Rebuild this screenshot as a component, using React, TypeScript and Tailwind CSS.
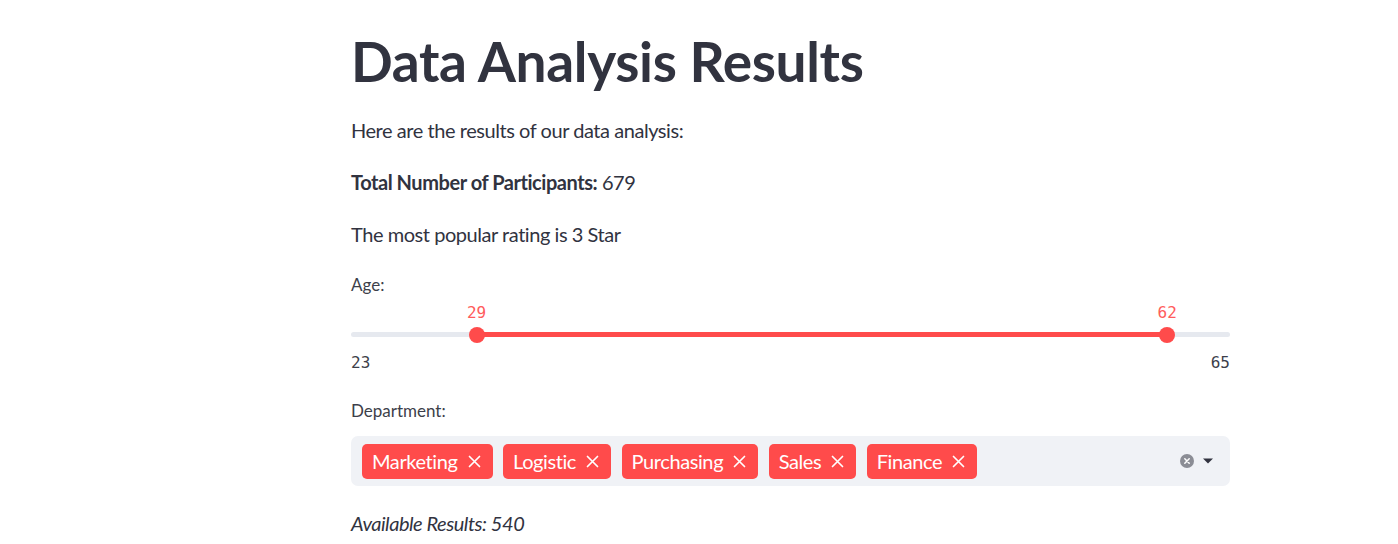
import React from "react";

const tags = ["Marketing", "Logistic", "Purchasing", "Sales", "Finance"];

const MIN = 23;
const MAX = 65;
const LO = 29;
const HI = 62;

function XIcon() {
  return (
    <svg width="13" height="13" viewBox="0 0 13 13" className="shrink-0">
      <path d="M1.5 1.5 L11.5 11.5 M11.5 1.5 L1.5 11.5" stroke="white" strokeWidth="1.7" strokeLinecap="round" />
    </svg>
  );
}

function Slider() {
  const lo = ((LO - MIN) / (MAX - MIN)) * 100;
  const hi = ((HI - MIN) / (MAX - MIN)) * 100;
  return (
    <div className="relative h-[44px] w-full">
      <div className="absolute left-0 right-0 top-[31px] h-[5px] rounded-full bg-[#e6e9ef]" />
      <div
        className="absolute top-[31px] h-[5px] bg-[#ff4b4b]"
        style={{ left: `${lo}%`, width: `${hi - lo}%` }}
      />
      {[
        { p: lo, v: LO },
        { p: hi, v: HI },
      ].map((t) => (
        <div key={t.v} className="absolute top-0" style={{ left: `${t.p}%` }}>
          <div className="absolute left-0 top-0 -translate-x-1/2 h-[24px] leading-[24px] text-[16px] text-[#ff5c5c] font-['DejaVu_Sans_Mono',monospace]">
            {t.v}
          </div>
          <div className="absolute left-0 top-[25.5px] h-[16px] w-[16px] -translate-x-1/2 rounded-full bg-[#ff4b4b]" />
        </div>
      ))}
    </div>
  );
}

export default function App() {
  return (
    <div className="min-h-[544px] w-[1398px] bg-white text-[#31333f] font-['Lato','Noto_Sans',sans-serif]">
      <div className="ml-[351px] w-[879px] flex flex-col">
        <h1 className="mt-[28px] h-[66px] leading-[66px] text-[55px] font-bold tracking-[-0.35px] text-[#31333f]">
          Data Analysis Results
        </h1>
        <div className="flex flex-col text-[20px] tracking-[-0.45px]">
          <p className="mt-[20px] h-[32px] leading-[32px]">Here are the results of our data analysis:</p>
          <p className="mt-[20px] h-[32px] leading-[32px]">
            <span className="font-bold">Total Number of Participants:</span> 679
          </p>
          <p className="mt-[20px] h-[32px] leading-[32px]">The most popular rating is 3 Star</p>
        </div>
        <div className="mt-[23px] h-[24px] leading-[24px] text-[17px] text-[#3d3f4a]">Age:</div>
        <div className="mt-[4px]">
          <Slider />
        </div>
        <div className="mt-[6px] flex h-[24px] items-center justify-between text-[16px] leading-[24px] font-['DejaVu_Sans_Mono',monospace] text-[#3d3f4a]">
          <span>{MIN}</span>
          <span>{MAX}</span>
        </div>
        <div className="mt-[24px] h-[24px] leading-[24px] text-[17px] text-[#3d3f4a]">Department:</div>
        <div className="mt-[13px] flex h-[50px] items-center rounded-[7px] bg-[#f0f2f6] pl-[11px] pr-[16px]">
          <div className="flex flex-1 items-center gap-[10.5px]">
            {tags.map((t) => (
              <div
                key={t}
                className="flex h-[35px] items-center gap-[10px] rounded-[5px] bg-[#ff4b4b] pl-[10px] pr-[12px] text-[20px] tracking-[-0.4px] text-white"
              >
                <span>{t}</span>
                <XIcon />
              </div>
            ))}
          </div>
          <div className="flex items-center gap-[8px]">
            <svg width="14" height="14" viewBox="0 0 14 14">
              <circle cx="7" cy="7" r="7" fill="#8b8d95" />
              <path d="M4.8 4.8 L9.2 9.2 M9.2 4.8 L4.8 9.2" stroke="white" strokeWidth="1.5" strokeLinecap="round" />
            </svg>
            <svg width="12" height="8" viewBox="0 0 12 8">
              <path d="M1 1.5 L11 1.5 L6 6.5 Z" fill="#31333f" />
            </svg>
          </div>
        </div>
        <p className="mt-[21px] h-[32px] leading-[32px] text-[20px] italic tracking-[-0.45px]">Available Results: 540</p>
      </div>
    </div>
  );
}
